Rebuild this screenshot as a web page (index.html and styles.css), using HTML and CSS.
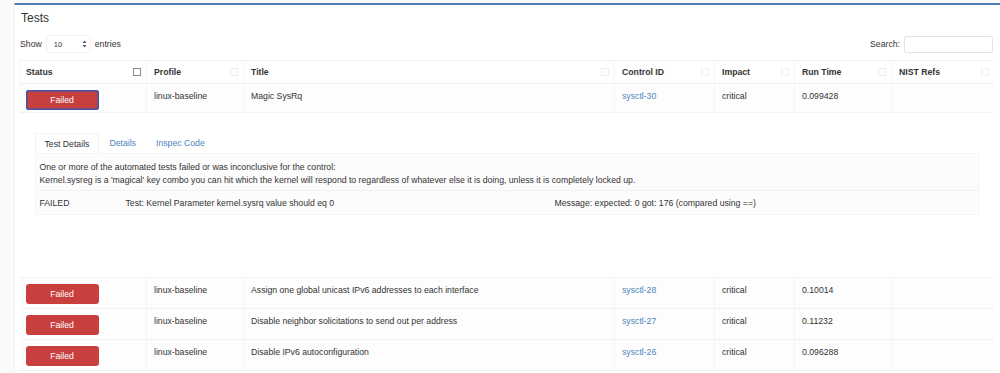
FILE: index.html
```html
<!DOCTYPE html>
<html lang="en">
<head>
  <meta charset="UTF-8" />
  <title>Tests</title>
  <link rel="stylesheet" href="styles.css">
</head>
<body>
  <div class="panel">
    <div class="panel-title">Tests</div>
    <div class="toolbar">
      <div class="length">Show <span class="select">10 <svg class="arrows" width="5" height="8" viewBox="0 0 5 8"><path d="M0.5 3L2.5 0.5L4.5 3Z M0.5 5L2.5 7.5L4.5 5Z" fill="#555"/></svg></span> entries</div>
      <div class="search">Search: <span class="search-box"></span></div>
    </div>
    <table class="tests">
      <colgroup>
        <col style="width:127px"><col style="width:97px"><col style="width:371px"><col style="width:100px"><col style="width:80px"><col style="width:97px"><col style="width:102px">
      </colgroup>
      <thead>
        <tr>
          <th>Status<span class="sort dark"></span></th>
          <th>Profile<span class="sort"></span></th>
          <th>Title<span class="sort"></span></th>
          <th>Control ID<span class="sort"></span></th>
          <th>Impact<span class="sort"></span></th>
          <th>Run Time<span class="sort"></span></th>
          <th>NIST Refs<span class="sort"></span></th>
        </tr>
      </thead>
      <tbody>
        <tr class="row first">
          <td><button class="failed focus">Failed</button></td>
          <td>linux-baseline</td>
          <td>Magic SysRq</td>
          <td><a href="#">sysctl-30</a></td>
          <td>critical</td>
          <td>0.099428</td>
          <td></td>
        </tr>
        <tr class="detail-row">
          <td colspan="7">
            <div class="tabs">
              <span class="tab active">Test Details</span>
              <span class="tab">Details</span>
              <span class="tab">Inspec Code</span>
            </div>
            <div class="tab-body">
              <p class="desc">One or more of the automated tests failed or was inconclusive for the control:<br>Kernel.sysreg is a 'magical' key combo you can hit which the kernel will respond to regardless of whatever else it is doing, unless it is completely locked up.</p>
              <div class="result">
                <span class="r-status">FAILED</span>
                <span class="r-test">Test: Kernel Parameter kernel.sysrq value should eq 0</span>
                <span class="r-msg">Message: expected: 0 got: 176 (compared using ==)</span>
              </div>
            </div>
          </td>
        </tr>
        <tr class="row">
          <td><button class="failed">Failed</button></td>
          <td>linux-baseline</td>
          <td>Assign one global unicast IPv6 addresses to each interface</td>
          <td><a href="#">sysctl-28</a></td>
          <td>critical</td>
          <td>0.10014</td>
          <td></td>
        </tr>
        <tr class="row">
          <td><button class="failed">Failed</button></td>
          <td>linux-baseline</td>
          <td>Disable neighbor solicitations to send out per address</td>
          <td><a href="#">sysctl-27</a></td>
          <td>critical</td>
          <td>0.11232</td>
          <td></td>
        </tr>
        <tr class="row">
          <td><button class="failed">Failed</button></td>
          <td>linux-baseline</td>
          <td>Disable IPv6 autoconfiguration</td>
          <td><a href="#">sysctl-26</a></td>
          <td>critical</td>
          <td>0.096288</td>
          <td></td>
        </tr>
      </tbody>
    </table>
  </div>
</body>
</html>
```

FILE: styles.css
```css
body {
  margin: 0;
  font-family: 'Liberation Sans', Arial, sans-serif;
  font-size: 8.7px;
  color: #333;
  background: #fafafa;
  overflow: hidden;
}
.panel {
  margin: 3px 0 0 14px;
  border-top: 2px solid #4f7fb0;
  border-left: 1px solid #f0f0f0;
  background: #fff;
  padding: 0 7px 0 4px;
  height: 370px;
  box-sizing: border-box;
}
.panel-title {
  font-size: 12px;
  padding: 6px 0 0 2px;
  height: 21px;
}
.toolbar {
  display: flex;
  justify-content: space-between;
  align-items: center;
  height: 22px;
  margin-top: 1px;
  padding-left: 1px;
}
.length, .search {
  display: flex;
  align-items: center;
  gap: 4px;
}
.select {
  display: inline-flex;
  justify-content: space-between;
  align-items: center;
  width: 45px;
  height: 18px;
  box-sizing: border-box;
  padding: 0 3px 0 7px;
  border: 1px solid #f0f0f0;
  border-radius: 3px;
  font-size: 7.5px;
  background: #fff;
}
.search-box {
  display: inline-block;
  width: 89px;
  height: 17px;
  border: 1px solid #e4e4e4;
  border-radius: 2px;
  box-sizing: border-box;
  background: #fff;
}
table.tests {
  border-collapse: collapse;
  table-layout: fixed;
  width: 974px;
  margin-top: 5px;
}
.tests th {
  position: relative;
  text-align: left;
  font-weight: bold;
  height: 22px;
  padding: 0 7px;
  border-top: 1px solid #f2f2f2;
  border-bottom: 1px solid #f0f0f0;
  border-left: 1px solid #f6f6f6;
  background: #fff;
}
.tests th:first-child {
  padding-left: 6px;
}
.sort {
  position: absolute;
  right: 5px;
  top: 7px;
  width: 6px;
  height: 6px;
  border: 1px solid #f0f0f0;
}
.sort.dark {
  border-color: #888;
}
.tests td {
  vertical-align: top;
  padding: 7px 7px 0;
  border-bottom: 1px solid #f3f3f3;
  border-left: 1px solid #f6f6f6;
  background: #fdfdfd;
}
.tests td:first-child {
  padding: 6px 0 0 6px;
  border-left: none;
}
.row {
  height: 31px;
}
.row.first {
  height: 29px;
}
.failed {
  display: block;
  width: 73px;
  height: 20px;
  border: none;
  border-radius: 3px;
  background: #c83f3d;
  color: #fff;
  font-family: inherit;
  font-size: 8.7px;
  padding: 0;
}
.failed.focus {
  box-shadow: inset 0 0 0 1.5px #3a57a8;
}
a {
  color: #4a86bd;
  text-decoration: none;
}
.detail-row {
  height: 165px;
}
.tests .detail-row td {
  padding: 20px 15px 0;
  background: #fff;
}
.tabs {
  display: flex;
  height: 20px;
  align-items: center;
}
.tab {
  color: #4a86bd;
  padding: 0 10px;
  line-height: 20px;
}
.tab.active {
  color: #333;
  border: 1px solid #f3f3f3;
  border-bottom: none;
  padding: 0 9px;
}
.tab-body {
  background: #fcfcfc;
  border: 1px solid #f5f5f5;
}
.desc {
  margin: 0;
  padding: 7px 4px 3px;
  line-height: 13px;
}
.result {
  display: flex;
  border-top: 1px solid #f3f3f3;
  height: 23px;
  align-items: center;
  padding-left: 4px;
}
.r-status {
  width: 86px;
}
.r-test {
  width: 429px;
}
```
